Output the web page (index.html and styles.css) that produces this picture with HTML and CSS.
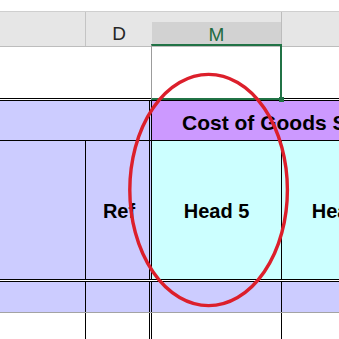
FILE: index.html
```html
<!DOCTYPE html>
<html lang="en">
<head>
    <meta charset="UTF-8">
    <title>Cost of Goods Sold - Sheet</title>
    <link rel="stylesheet" href="styles.css">
</head>
<body>
    <div class="sheet">
        <div class="ribbon-edge"></div>
        <div class="col-heads">
            <div class="head head-a"></div>
            <div class="head head-d">D</div>
            <div class="head head-m"><span>M</span></div>
            <div class="head head-n"></div>
        </div>
        <div class="row row-1">
            <div class="cell c-ad"></div>
            <div class="cell c-mn"></div>
        </div>
        <div class="row row-2">
            <div class="cell c-ad lav"></div>
            <div class="cell c-mn purple title">Cost of Goods Sold</div>
        </div>
        <div class="row row-3">
            <div class="cell c-a lav"></div>
            <div class="cell c-d lav heading">Ref</div>
            <div class="cell c-m cyan heading">Head 5</div>
            <div class="cell c-n cyan heading">Head 6</div>
        </div>
        <div class="row row-4">
            <div class="cell c-a lav"></div>
            <div class="cell c-d lav"></div>
            <div class="cell c-m lav"></div>
            <div class="cell c-n lav"></div>
        </div>
        <div class="row row-5">
            <div class="cell c-a"></div>
            <div class="cell c-d"></div>
            <div class="cell c-m"></div>
            <div class="cell c-n"></div>
        </div>
    </div>
    <div class="selection"><i class="handle"></i></div>
    <svg class="callout" width="339" height="339" viewBox="0 0 339 339">
        <ellipse cx="208.6" cy="190" rx="78.8" ry="115.6" fill="none" stroke="#dc1f2b" stroke-width="3.4"/>
    </svg>
</body>
</html>
```

FILE: styles.css
```css
body {
    margin: 0;
    width: 339px;
    height: 339px;
    overflow: hidden;
    position: relative;
    background: #fff;
    font-family: 'Liberation Sans', Arial, sans-serif;
}
.sheet {
    width: 480px;
}
.ribbon-edge {
    height: 11px;
    border-bottom: 1px solid #cfcfcf;
    background: #fff;
}
.col-heads {
    display: flex;
    height: 34px;
    background: #e6e6e6;
    border-bottom: 1px solid #bdbdbd;
    color: #262626;
    font-size: 19px;
}
.head {
    box-sizing: border-box;
}
.head-a {
    width: 86px;
    border-right: 1px solid #c4c4c4;
}
.head-d {
    width: 66px;
    padding-top: 11px;
    text-align: center;
}
.head-m {
    width: 130px;
    padding-top: 10px;
    border-right: 1px solid #bcbcbc;
}
.head-m span {
    display: block;
    height: 24px;
    line-height: 26px;
    background: #d2d2d2;
    color: #1f6b41;
    text-align: center;
}
.head-n {
    flex: 1;
}
.row {
    display: flex;
}
.row-1 {
    height: 51px;
}
.row-2 {
    height: 39px;
    border-top: 3px double #000;
    border-bottom: 1px solid #000;
}
.row-3 {
    height: 138px;
    border-bottom: 3px double #000;
}
.row-4 {
    height: 30px;
    border-bottom: 1px solid #a3a3a3;
}
.row-5 {
    height: 30px;
}
.cell {
    box-sizing: border-box;
}
.c-a {
    width: 86px;
    border-right: 1px solid #000;
}
.c-d {
    width: 66px;
    border-right: 3px double #000;
}
.c-m {
    width: 130px;
    border-right: 1px solid #000;
}
.c-n {
    width: 125px;
}
.row-2 .c-ad {
    width: 152px;
    border-right: 3px double #000;
}
.row-1 .c-ad {
    width: 151px;
}
.c-mn {
    flex: 1;
}
.lav {
    background: #ccccff;
}
.purple {
    background: #cc99ff;
}
.cyan {
    background: #ccffff;
}
.title {
    padding: 5px 0 0 30px;
    font-size: 21px;
    font-weight: bold;
    white-space: nowrap;
    line-height: 24px;
    display: flex;
    align-items: center;
}
.heading {
    display: flex;
    align-items: center;
    justify-content: center;
    padding-top: 3px;
    font-size: 20px;
    font-weight: bold;
    white-space: nowrap;
}
.row-3 .c-d {
    padding-left: 3px;
}
.selection {
    position: absolute;
    top: 44px;
    left: 151px;
    width: 131px;
    height: 56px;
    box-sizing: border-box;
    border: 2px solid #217346;
    border-left: 1px solid #9c9c9c;
}
.handle {
    position: absolute;
    right: -4px;
    bottom: -4px;
    width: 5px;
    height: 5px;
    background: #217346;
}
.callout {
    position: absolute;
    top: 0;
    left: 0;
}
```
